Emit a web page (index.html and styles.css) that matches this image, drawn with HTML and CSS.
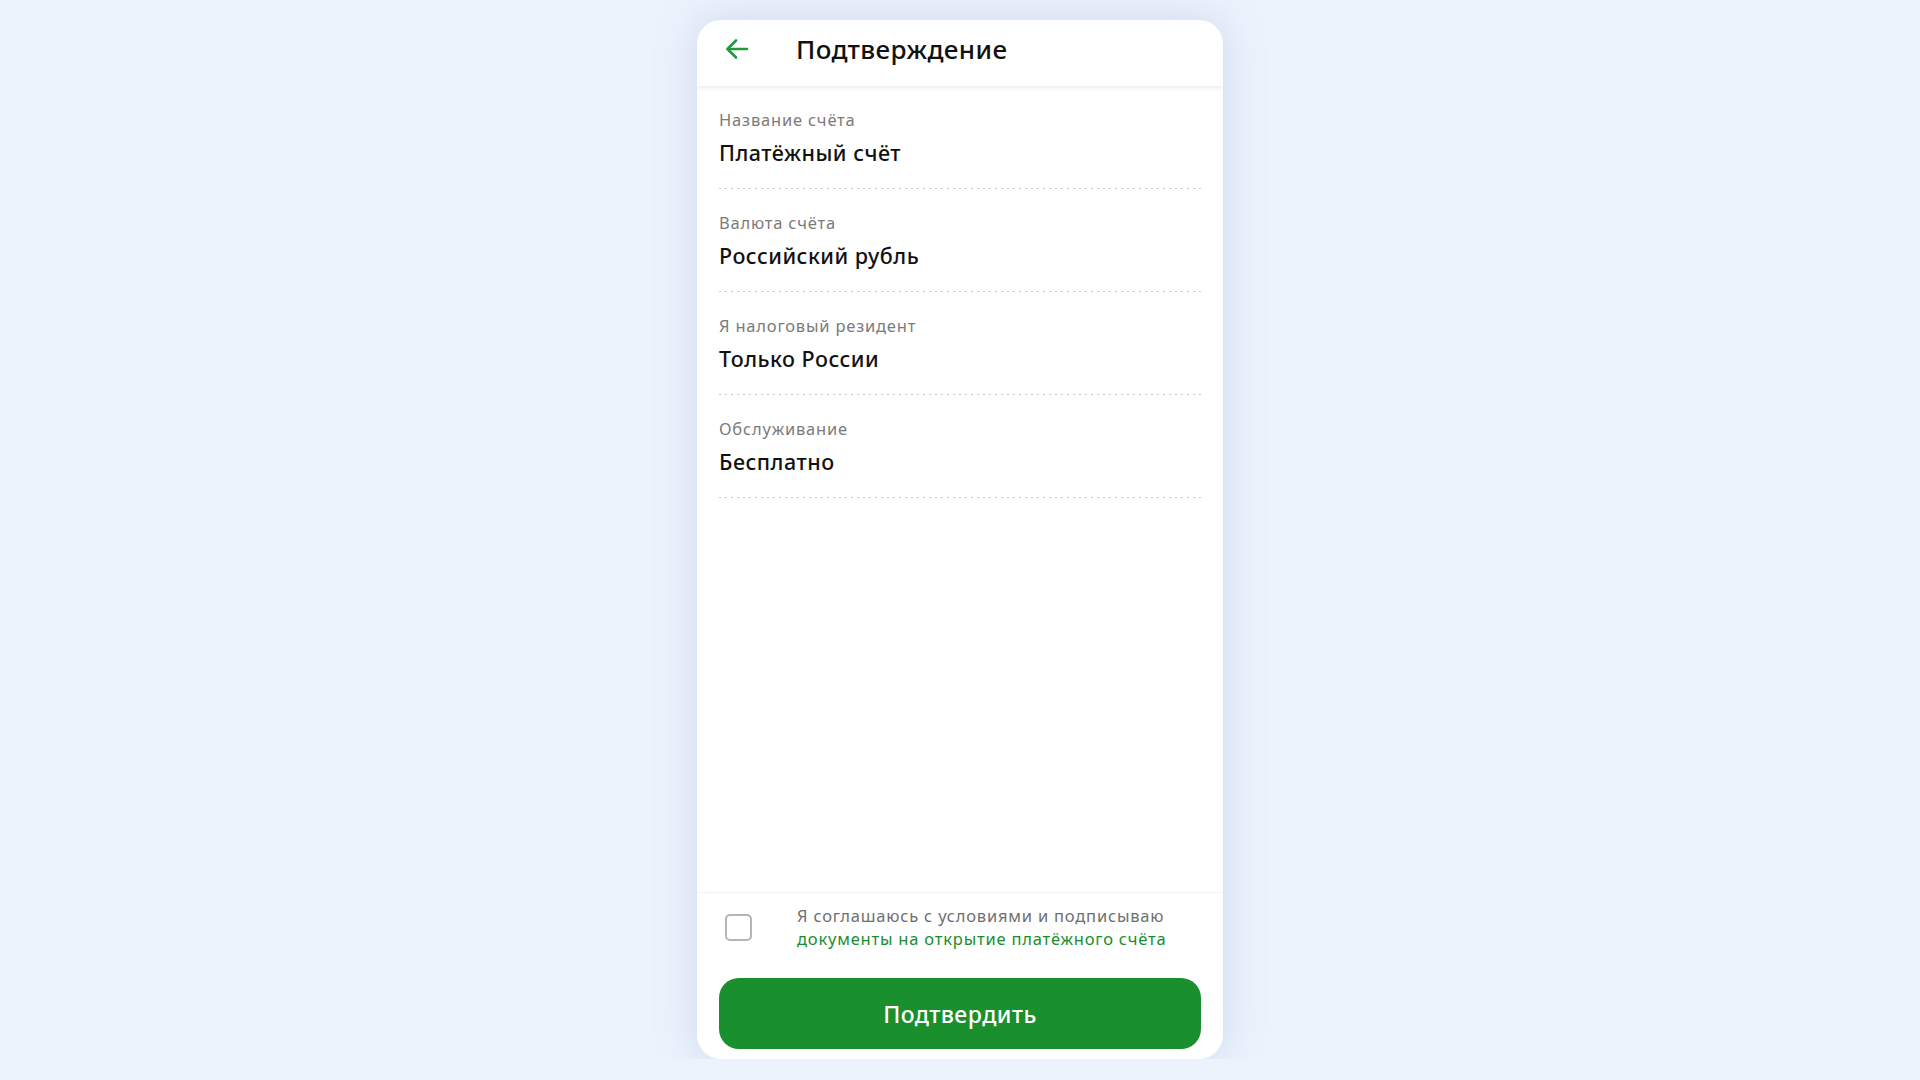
FILE: index.html
```html
<!DOCTYPE html>
<html lang="ru">
  <head>
    <meta charset="UTF-8" />
    <meta name="viewport" content="width=device-width, initial-scale=1.0" />
    <title>Подтверждение</title>
    <link rel="stylesheet" href="styles.css">
  </head>
  <body>
    <div class="phone">
      <div class="header">
        <button class="back" aria-label="Назад">
          <svg width="24" height="22" viewBox="0 0 24 22" fill="none" stroke="currentColor" stroke-width="2.6" stroke-linecap="round" stroke-linejoin="round">
            <path d="M22 11H3" />
            <path d="M11 2.5L2.5 11L11 19.5" />
          </svg>
        </button>
        <h1>Подтверждение</h1>
      </div>

      <div class="fields">
        <div class="field">
          <div class="label">Название счёта</div>
          <div class="value">Платёжный счёт</div>
        </div>
        <div class="field">
          <div class="label">Валюта счёта</div>
          <div class="value">Российский рубль</div>
        </div>
        <div class="field">
          <div class="label">Я налоговый резидент</div>
          <div class="value">Только России</div>
        </div>
        <div class="field">
          <div class="label">Обслуживание</div>
          <div class="value">Бесплатно</div>
        </div>
      </div>

      <div class="footer">
        <label class="agree">
          <span class="checkbox"></span>
          <span class="agree-text">
            Я соглашаюсь с условиями и подписываю
            <a href="#">документы на открытие платёжного счёта</a>
          </span>
        </label>
        <button class="confirm">Подтвердить</button>
      </div>
    </div>
  </body>
</html>
```

FILE: styles.css
```css
body {
  font-family: "Noto Sans", "Open Sans", sans-serif;
  background-color: #edf3fd;
  margin: 0;
  padding: 20px 0 0;
  display: flex;
  justify-content: center;
}

.phone {
  width: 526px;
  height: 1039px;
  background-color: #fff;
  border-radius: 24px;
  box-shadow: 0 0 40px rgba(140, 165, 210, 0.35);
  display: flex;
  flex-direction: column;
  overflow: hidden;
}

/* header */
.header {
  height: 66px;
  display: flex;
  align-items: center;
  padding: 0 28px;
  box-shadow: 0 2px 5px rgba(0, 0, 0, 0.08);
  position: relative;
  z-index: 1;
}

.back {
  border: none;
  background: none;
  padding: 0;
  color: #22983a;
  display: flex;
  margin: -9px 47px 0 0;
  cursor: pointer;
}

h1 {
  margin: -9px 0 0;
  font-size: 26px;
  font-weight: 500;
  letter-spacing: 0.4px;
  color: #111;
}

/* fields */
.fields {
  flex: 1;
  padding: 0 22px;
}

.field {
  padding: 23px 0 22px;
  background-image: linear-gradient(to right, #c9c9c9 2px, transparent 2px);
  background-size: 6px 1px;
  background-repeat: repeat-x;
  background-position: left bottom;
}

.label {
  font-size: 16.5px;
  line-height: 22px;
  letter-spacing: 0.8px;
  color: #7b7b7b;
}

.value {
  margin-top: 8px;
  font-size: 21.5px;
  font-weight: 500;
  line-height: 28px;
  letter-spacing: 0.5px;
  color: #111;
}

/* footer */
.footer {
  border-top: 1px solid #f2f2f2;
  padding: 11px 22px 10px;
}

.agree {
  display: flex;
  align-items: center;
  cursor: pointer;
}

.checkbox {
  width: 23px;
  height: 23px;
  border: 2px solid #b5b5b5;
  border-radius: 5px;
  margin: 0 45px 0 6px;
  flex-shrink: 0;
}

.agree-text {
  font-size: 16.5px;
  line-height: 23px;
  letter-spacing: 0.8px;
  color: #6f6f6f;
}

.agree-text a {
  color: #1a8d2e;
  text-decoration: none;
}

.confirm {
  display: block;
  width: 100%;
  height: 71px;
  margin-top: 28px;
  border: none;
  border-radius: 20px;
  background-color: #1a8f2e;
  color: #fff;
  font-family: inherit;
  font-size: 23px;
  font-weight: 500;
  letter-spacing: 0.5px;
  cursor: pointer;
}
```
